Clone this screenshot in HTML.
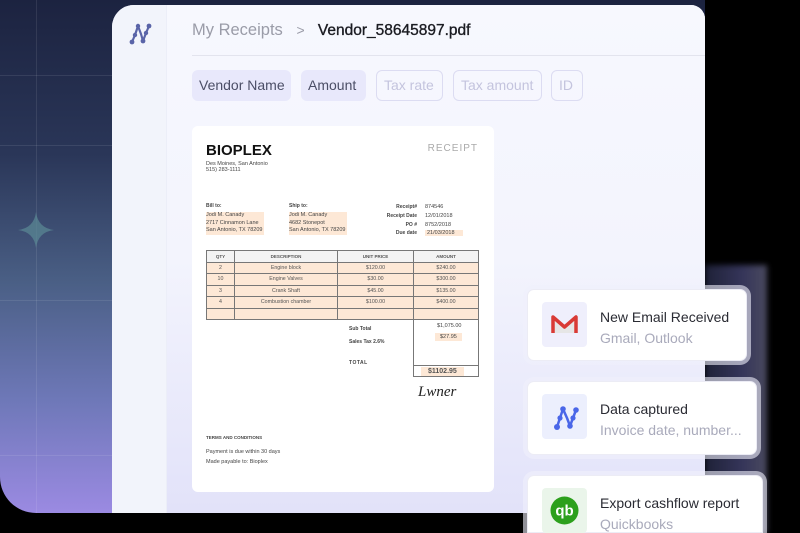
<!DOCTYPE html>
<html style="overflow:hidden;width:800px;height:533px"><head><meta charset="utf-8"><style>
*{margin:0;padding:0;box-sizing:border-box}
body{width:800px;height:533px;overflow:hidden;background:#000;font-family:"Liberation Sans",sans-serif;position:relative}
.bg{position:absolute;left:0;top:0;width:705px;height:513px;border-bottom-left-radius:36px;overflow:hidden;background:linear-gradient(180deg,#1c2340 0%,#2a3658 30%,#4a5f85 55%,#6e78b8 78%,#9b8ae2 100%)}
.gl{position:absolute;background:rgba(255,255,255,.09)}
.win{position:absolute;left:112px;top:5px;width:593px;height:508px;border-top-left-radius:22px;border-top-right-radius:14px;background:#f5f6fd;overflow:hidden}
.side{position:absolute;left:0;top:0;width:55px;height:100%;background:#f2f4fb;border-right:1px solid #eceef8}
.main{position:absolute;left:55px;top:0;right:0;bottom:0;background:linear-gradient(180deg,#f7f8fe 0%,#f3f4fd 50%,#e2e2f9 100%)}
.crumb{position:absolute;left:25px;top:16px;font-size:16.5px;color:#9a9ca8;white-space:nowrap}
.crumb b{color:#1b1c22;font-weight:normal;margin-left:4px;font-size:15.5px;-webkit-text-stroke:.35px #1b1c22}
.hr{position:absolute;left:25px;right:0;top:50px;height:1px;background:#e3e4ee}
.chip{position:absolute;top:65px;height:31px;border-radius:6px;font-size:14px;line-height:31px;padding:0 7px;white-space:nowrap}
.f{background:#e8e8fb;color:#4b4e66}
.e{border:1.5px solid #dcdcf2;color:#c4c4de;line-height:28px}
.doc{position:absolute;left:25px;top:121px;width:302px;height:366px;background:#fff;border-radius:6px;font-size:5.5px;color:#444}
.doc .t{position:absolute;white-space:nowrap}
.hl{background:#fde8d6}
table{position:absolute;left:14px;top:124px;width:273px;border-collapse:collapse;font-size:5.3px;color:#555}
td{border:.7px solid #777;height:11.5px;text-align:center}
tr.h td{background:#f3f3f3;font-weight:bold;font-size:4.5px}
tr.r td{background:#fde8d6}
.card{position:absolute;background:#fff;border:1px solid #ececf5;border-radius:7px;box-shadow:0 0 0 4px rgba(240,240,252,.6)}
.ic{position:absolute;left:14px;top:12px;width:45px;height:45px;border-radius:4px}
.ct{position:absolute;left:72px;top:19px;font-size:14px;color:#2a2b33;white-space:nowrap}
.cs{position:absolute;left:72px;top:40px;font-size:14px;color:#a9aabb;white-space:nowrap}
.noise{position:absolute;background:linear-gradient(90deg,#2c3050,#4c4c80 60%,#6a6a88);filter:blur(3px)}
</style></head><body>
<div class="bg">
<div class="gl" style="left:36px;top:0;width:1px;height:513px"></div>
<div class="gl" style="left:0;top:75px;width:112px;height:1px"></div>
<div class="gl" style="left:0;top:145px;width:112px;height:1px"></div>
<div class="gl" style="left:0;top:300px;width:112px;height:1px"></div>
<div class="gl" style="left:0;top:455px;width:112px;height:1px"></div>
<svg style="position:absolute;left:18px;top:212px" width="36" height="36" viewBox="0 0 36 36"><path d="M18 0 Q20 16 36 18 Q20 20 18 36 Q16 20 0 18 Q16 16 18 0Z" fill="#5b8a95" opacity=".7"/></svg>
</div>
<div class="noise" style="left:705px;top:265px;width:62px;height:268px;opacity:.7"></div>
<div class="win">
<div class="side">
<svg style="position:absolute;left:16px;top:17px" width="24" height="24" viewBox="0 0 24 24"><path d="M4 20 L7 13 L10 4 L13 12 L15 19 L18 11 L21 4" stroke="#5a64a8" stroke-width="2.2" fill="none" stroke-linejoin="round"/><g fill="#5a64a8"><circle cx="4" cy="20" r="2.4"/><circle cx="7" cy="13" r="2.2"/><circle cx="10" cy="4" r="2.2"/><circle cx="15" cy="19" r="2.4"/><circle cx="18" cy="11" r="2.2"/><circle cx="21" cy="4" r="2.4"/></g></svg>
</div>
<div class="main">
<div class="crumb">My Receipts &nbsp;&nbsp;<span style="font-size:14px">&gt;</span> &nbsp;<b>Vendor_58645897.pdf</b></div>
<div class="hr"></div>
<div class="chip f" style="left:25px;width:99px">Vendor Name</div>
<div class="chip f" style="left:134px;width:65px">Amount</div>
<div class="chip e" style="left:209px;width:67px">Tax rate</div>
<div class="chip e" style="left:286px;width:89px">Tax amount</div>
<div class="chip e" style="left:384px;width:32px">ID</div>
<div class="doc">
<div class="t" style="left:14px;top:16px;font-size:15px;font-weight:bold;color:#111">BIOPLEX</div>
<div class="t" style="left:14px;top:35px">Des Moines, San Antonio<br>515) 283-1111</div>
<div class="t" style="right:16px;top:17px;font-size:10px;color:#aaa;letter-spacing:1px">RECEIPT</div>
<div class="t" style="left:14px;top:77px;font-weight:bold;font-size:5px">Bill to:</div>
<div class="t hl" style="left:14px;top:86px;line-height:7.5px;padding:0 2px 0 0">Jodi M. Canady<br>2717 Cinnamon Lane<br>San Antonio, TX 78209</div>
<div class="t" style="left:97px;top:77px;font-weight:bold;font-size:5px">Ship to:</div>
<div class="t hl" style="left:97px;top:86px;line-height:7.5px;padding:0 2px 0 0">Jodi M. Canady<br>4682 Stonepot<br>San Antonio, TX 78209</div>
<div class="t" style="left:180px;top:77px;width:45px;text-align:right;line-height:8.8px;font-weight:bold;font-size:5px">Receipt#<br>Receipt Date<br>PO #<br>Due date</div>
<div class="t" style="left:233px;top:77px;line-height:8.8px">874546<br>12/01/2018<br>8752/2018<br><span class="hl" style="padding:0 8px 0 2px">21/03/2018</span></div>
<table>
<tr class="h"><td style="width:28px">QTY</td><td style="width:103px">DESCRIPTION</td><td style="width:76px">UNIT PRICE</td><td>AMOUNT</td></tr>
<tr class="r"><td>2</td><td>Engine block</td><td>$120.00</td><td>$240.00</td></tr>
<tr class="r"><td>10</td><td>Engine Valves</td><td>$30.00</td><td>$300.00</td></tr>
<tr class="r"><td>3</td><td>Crank Shaft</td><td>$45.00</td><td>$135.00</td></tr>
<tr class="r"><td>4</td><td>Combustion chamber</td><td>$100.00</td><td>$400.00</td></tr>
<tr class="r"><td></td><td></td><td></td><td></td></tr>
</table>
<div class="t" style="left:221px;top:192px;width:66px;height:59px;border:.7px solid #777;border-top:none"></div>
<div class="t" style="left:221px;top:239px;width:66px;height:1px;background:#777"></div>
<div class="t" style="left:157px;top:197px;font-weight:bold;font-size:5px;line-height:12.5px">Sub Total<br>Sales Tax 2.6%</div>
<div class="t" style="left:157px;top:234px;font-weight:bold;font-size:5px;letter-spacing:.5px">TOTAL</div>
<div class="t" style="left:245px;top:197px">$1,075.00</div>
<div class="t hl" style="left:243px;top:207px;padding:1px 5px">$27.95</div>
<div class="t hl" style="left:229px;top:241px;padding:1px 7px;font-size:7px;font-weight:bold;color:#555">$1102.95</div>
<div class="t" style="left:226px;top:258px;font-family:'Liberation Serif',serif;font-style:italic;font-size:15px;color:#222">Lwner</div>
<div class="t" style="left:14px;top:309px;font-weight:bold;font-size:4.5px">TERMS AND CONDITIONS</div>
<div class="t" style="left:14px;top:321px;line-height:10px">Payment is due within 30 days<br>Made payable to: Bioplex</div>
</div>
</div>
</div>
<div class="card" style="left:527px;top:289px;width:220px;height:72px">
<div class="ic" style="background:#efeffc"><svg width="45" height="45" viewBox="0 0 45 45"><path d="M11 16 L22.5 26 L34 16 V31 H11Z" fill="#e6e6e6"/><path d="M11 31 V15 L22.5 25 L34 15 V31" stroke="#d93a35" stroke-width="3.5" fill="none" stroke-linejoin="round"/></svg></div>
<div class="ct">New Email Received</div><div class="cs">Gmail, Outlook</div></div>
<div class="card" style="left:527px;top:381px;width:230px;height:74px">
<div class="ic" style="background:#eceffd"><svg width="45" height="45" viewBox="0 0 45 45"><path d="M15 33 L18 24 L21 15 L25 24 L28 32 L31 24 L34 16" stroke="#4a66e8" stroke-width="2.5" fill="none" stroke-linejoin="round"/><g fill="#4a66e8"><circle cx="15" cy="33" r="3"/><circle cx="18" cy="24" r="2.6"/><circle cx="21" cy="15" r="2.8"/><circle cx="28" cy="32" r="2.8"/><circle cx="31" cy="24" r="2.6"/><circle cx="34" cy="16" r="2.8"/></g></svg></div>
<div class="ct">Data captured</div><div class="cs">Invoice date, number...</div></div>
<div class="card" style="left:527px;top:475px;width:236px;height:58px;border-bottom-left-radius:0;border-bottom-right-radius:0">
<div class="ic" style="background:#eaf5ea"><svg width="45" height="45" viewBox="0 0 45 45"><circle cx="22.5" cy="22.5" r="14" fill="#2ca01c"/><text x="22.5" y="27.5" text-anchor="middle" font-family="Liberation Sans" font-weight="bold" font-size="15" fill="#fff">qb</text></svg></div>
<div class="ct">Export cashflow report</div><div class="cs">Quickbooks</div></div>
</body></html>
